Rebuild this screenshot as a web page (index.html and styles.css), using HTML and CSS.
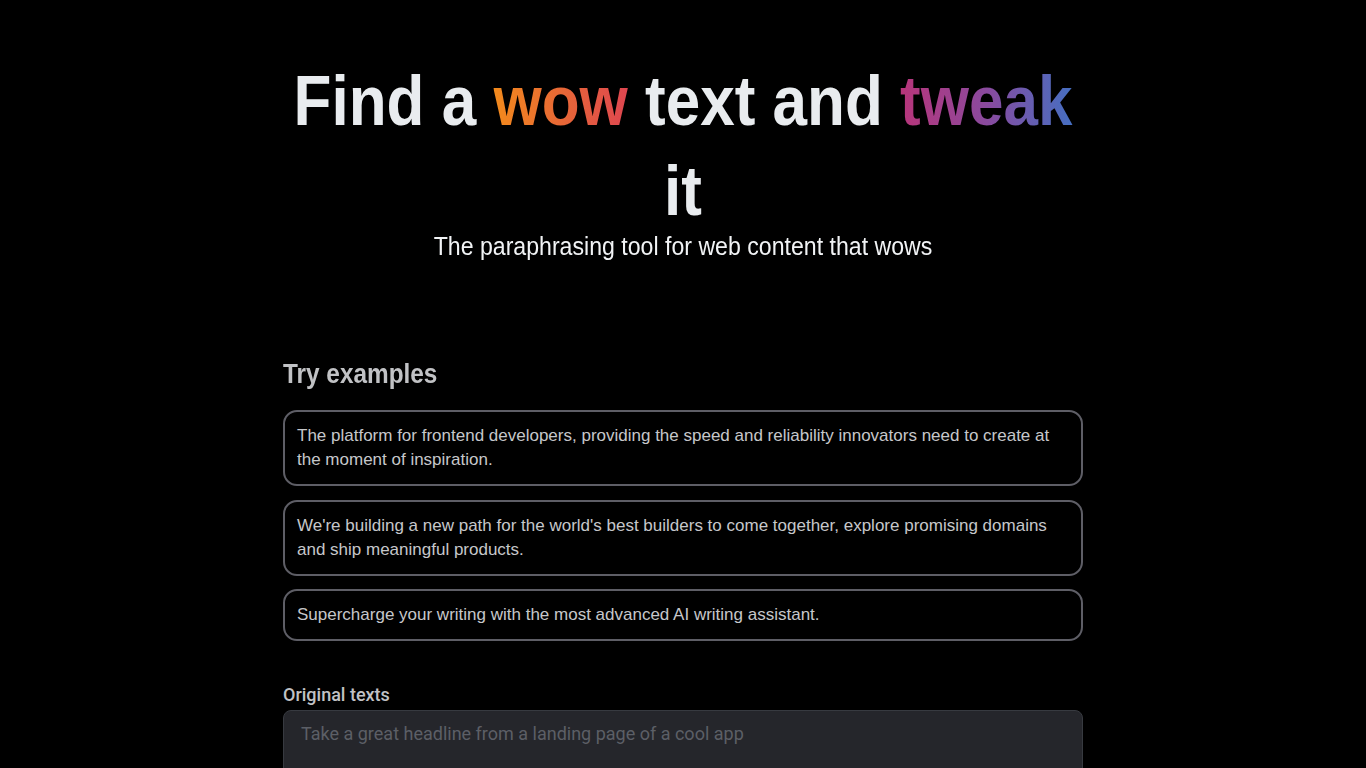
FILE: index.html
```html
<!DOCTYPE html>
<html lang="en">
<head>
<meta charset="utf-8">
<title>Find a wow text and tweak it</title>
<link rel="stylesheet" href="styles.css">
</head>
<body>
<main class="page">
  <header class="hero">
    <h1 class="title">Find a <span class="grad grad-wow">wow</span> text and <span class="grad grad-tweak">tweak</span> it</h1>
    <p class="subtitle">The paraphrasing tool for web content that wows</p>
  </header>
  <section class="examples">
    <h2 class="examples-title">Try examples</h2>
    <div class="example-list">
      <div class="example">The platform for frontend developers, providing the speed and reliability innovators need to create at the moment of inspiration.</div>
      <div class="example">We're building a new path for the world's best builders to come together, explore promising domains and ship meaningful products.</div>
      <div class="example">Supercharge your writing with the most advanced AI writing assistant.</div>
    </div>
  </section>
  <section class="field">
    <label class="field-label" for="orig">Original texts</label>
    <textarea class="field-input" id="orig" placeholder="Take a great headline from a landing page of a cool app"></textarea>
  </section>
</main>
</body>
</html>
```
FILE: styles.css
```css
html, body {
  margin: 0;
  padding: 0;
  background: #000;
}
body {
  font-family: "Liberation Sans", Arial, sans-serif;
  color: #c1c2c5;
}
.page {
  width: 800px;
  margin: 0 auto;
  padding-top: 56px;
}
/* headline type is a condensed grotesque: emulate with a horizontal squeeze */
.hero {
  text-align: center;
  width: 900px;
  margin: 0 -50px;
  transform: scaleX(0.886);
  transform-origin: center top;
}
.title {
  margin: 0;
  font-size: 70px;
  line-height: 90px;
  font-weight: 700;
  color: #e9ecef;
}
.grad {
  -webkit-background-clip: text;
  background-clip: text;
  color: transparent;
}
.grad-wow {
  background-image: linear-gradient(90deg, #f28a1c 0%, #de4650 100%);
}
.grad-tweak {
  background-image: linear-gradient(90deg, #b8357a 0%, #8a4a9e 50%, #456fc2 100%);
}
.subtitle {
  margin: -4px 0 0;
  font-size: 26.1px;
  line-height: 28px;
  color: #f1f3f5;
}
.examples {
  margin-top: 97px;
}
.examples-title {
  margin: 0 0 19px;
  font-size: 28px;
  line-height: 34px;
  font-weight: 700;
  color: #c1c2c5;
  transform: scaleX(0.87);
  transform-origin: left top;
}
.example-list {
  display: flex;
  flex-direction: column;
  gap: 13.5px;
}
.example {
  border: 2px solid #5e5e66;
  border-radius: 14px;
  padding: 12px;
  font-size: 17px;
  line-height: 24px;
  color: #c6c7ca;
}
.field {
  margin-top: 41px;
  display: flex;
  flex-direction: column;
}
.field-label {
  font-family: Roboto, "Liberation Sans", sans-serif;
  font-weight: 500;
  font-size: 18px;
  line-height: 25px;
  color: #c1c2c5;
  margin-bottom: 3px;
}
.field-input {
  box-sizing: border-box;
  width: 100%;
  height: 130px;
  resize: none;
  font-family: Roboto, "Liberation Sans", sans-serif;
  font-size: 18px;
  line-height: 28px;
  padding: 9px 16px 9px 17px;
  background: #25262b;
  border: 1px solid #373a40;
  border-radius: 8px;
  color: #c1c2c5;
  outline: none;
}
.field-input::placeholder {
  color: #5c5f66;
}
```
